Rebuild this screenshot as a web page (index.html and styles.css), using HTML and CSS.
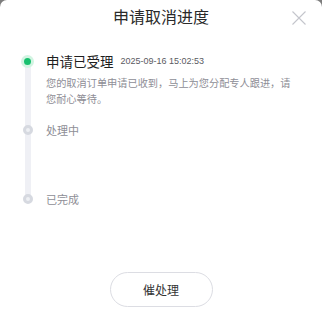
FILE: index.html
```html
<!DOCTYPE html>
<html lang="zh-CN">
<head>
<meta charset="utf-8">
<title>申请取消进度</title>
<link rel="stylesheet" href="styles.css">
</head>
<body>
<div class="panel">
  <header class="head">
    <h1 class="title">申请取消进度</h1>
    <button class="close" aria-label="关闭">
      <svg width="14" height="14" viewBox="0 0 14 14"><path d="M0.5 0.5L13.5 13.5M13.5 0.5L0.5 13.5" stroke="#c4c5cc" stroke-width="1.1" fill="none"/></svg>
    </button>
  </header>
  <ul class="timeline">
    <li class="step done">
      <span class="dot"></span>
      <div class="body">
        <div class="row"><span class="name">申请已受理</span><span class="time">2025-09-16 15:02:53</span></div>
        <p class="desc">您的取消订单申请已收到，马上为您分配专人跟进，请您耐心等待。</p>
      </div>
    </li>
    <li class="step">
      <span class="dot"></span>
      <div class="body"><div class="row"><span class="state">处理中</span></div></div>
    </li>
    <li class="step last">
      <span class="dot"></span>
      <div class="body"><div class="row"><span class="state">已完成</span></div></div>
    </li>
  </ul>
  <div class="actions">
    <button class="urge">催处理</button>
  </div>
</div>
</body>
</html>
```
FILE: styles.css
```css
html, body {
  margin: 0;
  padding: 0;
  background: #7d7d7d;
  font-family: "Liberation Sans", "Noto Sans CJK SC", sans-serif;
}
.panel {
  width: 322px;
  height: 316px;
  background: #fff;
  border-radius: 7px 7px 0 0;
  display: flex;
  flex-direction: column;
  box-sizing: border-box;
}
.head {
  height: 36px;
  display: flex;
  align-items: center;
  justify-content: center;
  position: relative;
}
.title {
  margin: 0;
  font-size: 16px;
  font-weight: 400;
  color: #2a2a2a;
  line-height: 36px;
}
.close {
  position: absolute;
  right: 16px;
  top: 11px;
  width: 14px;
  height: 14px;
  padding: 0;
  border: 0;
  background: none;
  display: block;
}
.close svg { display: block; }
.timeline {
  list-style: none;
  margin: 15px 0 0 0;
  padding: 0 22px 0 21px;
  position: relative;
}
.step {
  display: flex;
  gap: 12px;
  min-height: 69px;
  position: relative;
}
.step.last { min-height: 20px; }
.step::before {
  content: "";
  position: absolute;
  left: 3.5px;
  top: 10px;
  width: 6px;
  height: 69px;
  background: #eff0f5;
}
.step.last::before { display: none; }
.dot {
  flex: none;
  width: 13px;
  height: 20px;
  position: relative;
  display: flex;
  align-items: center;
  justify-content: center;
}
.dot::after {
  content: "";
  width: 4px;
  height: 4px;
  border-radius: 50%;
  background: #eef0f4;
  border: 3.5px solid #d6d9e0;
  position: relative;
}
.done .dot::after {
  width: 7px;
  height: 7px;
  background: #17c06e;
  border: 3px solid #d2f4e2;
}
.body { flex: 1; min-width: 0; }
.row {
  height: 20px;
  display: flex;
  align-items: center;
}
.name {
  font-size: 13.5px;
  color: #1f1f1f;
}
.time {
  margin-left: 7px;
  font-size: 9px;
  color: #5a5a62;
}
.state {
  font-size: 11px;
  color: #8e8e96;
}
.desc {
  margin: 5px 0 0 0;
  font-size: 10.2px;
  line-height: 16px;
  color: #8e8e96;
  width: 252px;
}
.actions {
  margin-top: auto;
  padding-bottom: 9px;
  display: flex;
  justify-content: center;
}
.urge {
  width: 103px;
  height: 35px;
  border: 1px solid #dcdde3;
  border-radius: 18px;
  background: #fff;
  font-family: "Liberation Sans", "Noto Sans CJK SC", sans-serif;
  font-size: 12px;
  color: #333;
  padding: 0;
}
```
